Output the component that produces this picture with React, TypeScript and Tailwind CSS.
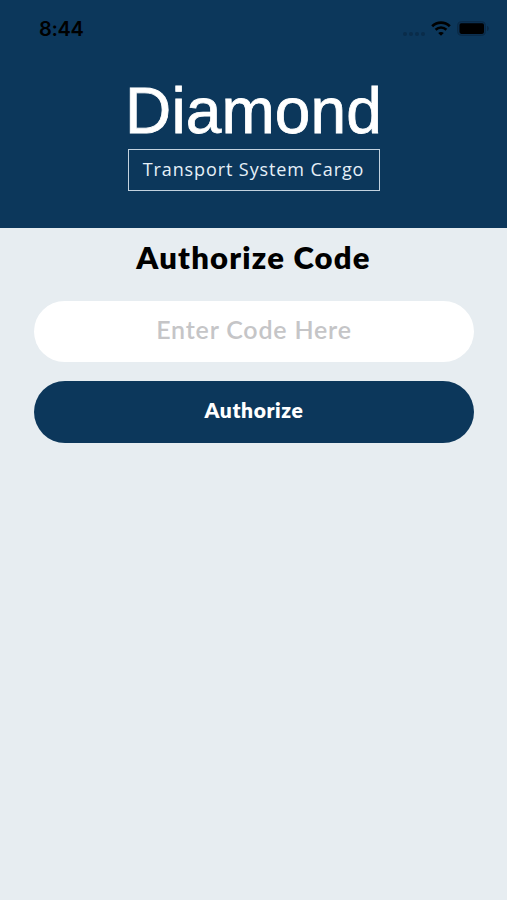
function StatusBar() {
  return (
    <div className="flex h-[58px] items-center justify-between pl-[39px] pr-[17px] text-black">
      <span className="font-['Inter',sans-serif] text-[20px] font-semibold leading-[24px] tracking-[-0.3px]">8:44</span>
      <div className="flex items-center">
        <div className="mr-[6px] mt-[9px] flex gap-[2px]">
          {[0, 1, 2, 3].map((dot) => (
            <span key={dot} className="h-[4px] w-[4px] rounded-full bg-[#0a2c4a]" />
          ))}
        </div>
        <svg className="-mt-[2px]" width="20" height="15" viewBox="0 0 20 15" fill="none" stroke="black">
          <path d="M1.2 5.2C6.2 0.4 13.8 0.4 18.8 5.2" strokeWidth="2.7" />
          <path d="M4.6 8.7C7.7 5.8 12.3 5.8 15.4 8.7" strokeWidth="2.6" />
          <path d="M10 14.8L7.2 12C8.8 10.5 11.2 10.5 12.8 12Z" fill="black" stroke="none" />
        </svg>
        <svg className="-mt-[2px] ml-[6px]" width="33" height="15" viewBox="0 0 33 15">
          <rect x="0.5" y="0.5" width="28" height="14" rx="4" fill="#0b2f50" stroke="#0a2a47" />
          <rect x="2.5" y="2.3" width="24.5" height="10.6" rx="1.8" fill="black" />
          <path d="M30 5C32.4 5.6 32.4 9.4 30 10Z" fill="#0a2946" />
        </svg>
      </div>
    </div>
  );
}

function Logo() {
  return (
    <div className="flex flex-col items-center">
      <div className="mt-[21px] whitespace-nowrap font-['Liberation_Sans',Arial,sans-serif] text-[64px] leading-[64px] tracking-[0.1px] text-white [-webkit-text-stroke:0.8px_white]">
        Diamond
      </div>
      <div className="mt-[6px] flex h-[42px] w-[252px] items-center justify-center whitespace-nowrap border border-[#c3d2df] pb-[2px] font-['Open_Sans',sans-serif] text-[18px] font-medium leading-[24px] tracking-[0.9px] text-[#e6f0f8]">
        Transport System Cargo
      </div>
    </div>
  );
}

export default function App() {
  return (
    <main className="flex h-[900px] w-[507px] flex-col overflow-hidden bg-[#e7edf1] font-['Lato',sans-serif]">
      <header className="h-[228px] shrink-0 bg-[#0c375b]">
        <StatusBar />
        <Logo />
      </header>
      <h1 className="mt-[10px] h-[40px] whitespace-nowrap text-center text-[31px] font-extrabold leading-[39px] tracking-[1.2px] text-black">
        Authorize Code
      </h1>
      <form className="mt-[23px] flex flex-col gap-[19px] pl-[34px] pr-[33px]" onSubmit={(e) => e.preventDefault()}>
        <input
          type="text"
          aria-label="Code"
          placeholder="Enter Code Here"
          className="h-[61px] w-full rounded-full bg-white pb-[6px] text-center text-[25px] font-semibold tracking-[0.8px] text-black outline-none placeholder:text-[#c5c5c7]"
        />
        <button
          type="submit"
          className="h-[62px] w-full rounded-full bg-[#0c375b] pb-[4px] text-center text-[21px] font-extrabold tracking-[0.6px] text-white"
        >
          Authorize
        </button>
      </form>
    </main>
  );
}
